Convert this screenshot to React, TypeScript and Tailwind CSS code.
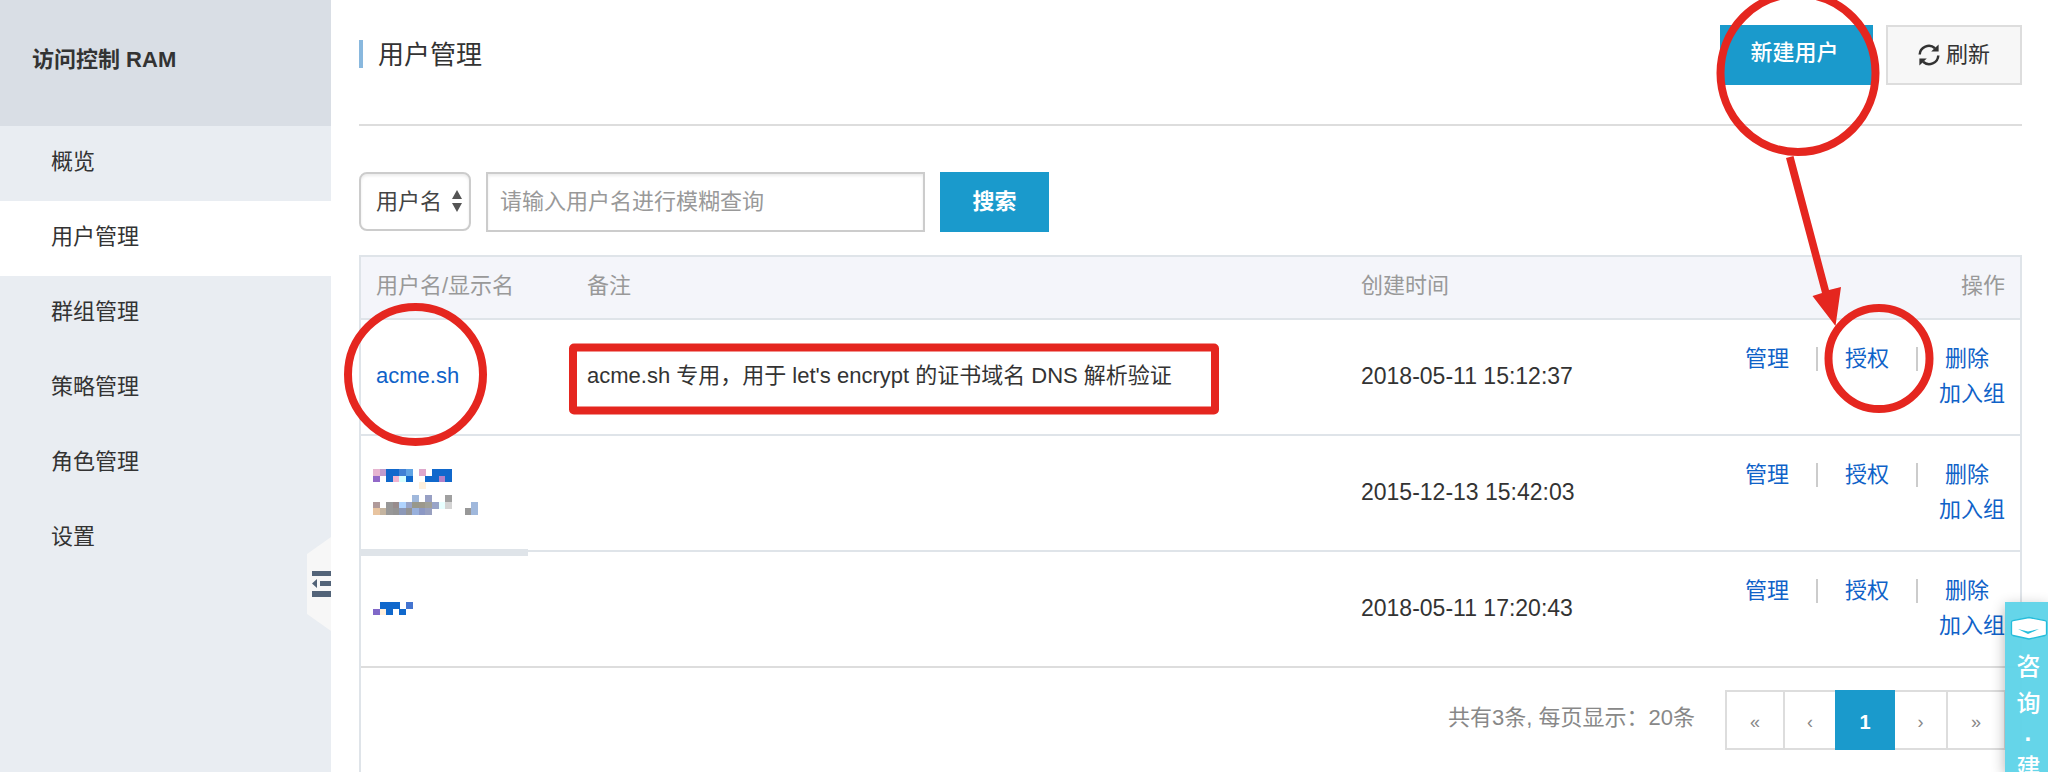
import React from "react";

const MENU = ["概览", "用户管理", "群组管理", "策略管理", "角色管理", "设置"];
const ACTIVE_MENU = "用户管理";

type Pixel = [column: number, row: number, color: string];

const BLUE = "#1068cc";

const NAME_PIXELS_A: Pixel[] = [
  [0, 0, "#e6b4d0"], [1, 0, "#c09ccc"], [2, 0, BLUE], [3, 0, BLUE], [4, 0, "#4080d4"], [5, 0, "#60a4e4"],
  [7, 0, "#dea8cc"], [9, 0, BLUE], [10, 0, BLUE], [11, 0, BLUE],
  [0, 1, "#9268c8"], [2, 1, BLUE], [3, 1, "#f0b4d0"], [4, 1, "#d4ffff"], [5, 1, BLUE],
  [8, 1, BLUE], [9, 1, BLUE], [10, 1, "#b480c8"], [11, 1, BLUE],
  [7, 2, "#fff0dc"],
  [6, 4, "#a0b8dc"], [8, 4, "#98a0c4"], [11, 4, "#a0a0a0"],
  [0, 5, "#b09a9a"], [2, 5, "#989898"], [3, 5, "#988c8c"], [4, 5, "#b0d4ff"], [5, 5, "#98a4c8"], [6, 5, "#98988c"],
  [7, 5, "#9c988c"], [8, 5, "#a0a098"], [9, 5, "#98a4c8"], [10, 5, "#e8ffff"], [11, 5, "#d4d4d4"], [15, 5, "#a0b8dc"],
  [0, 6, "#e8c4a0"], [1, 6, "#c4b4a0"], [2, 6, "#989898"], [3, 6, "#949494"], [4, 6, "#8c98b8"], [5, 6, "#949494"],
  [6, 6, "#98b0dc"], [7, 6, "#8c98c4"], [8, 6, "#98a0c0"], [14, 6, "#989898"], [15, 6, "#a0b8dc"],
];

const NAME_PIXELS_B: Pixel[] = [
  [1, 0, BLUE], [2, 0, BLUE], [3, 0, BLUE], [5, 0, "#4474d0"],
  [0, 1, "#8068c8"], [1, 1, "#fff0dc"], [2, 1, BLUE], [4, 1, BLUE],
];

interface User {
  name?: string;
  pixels?: Pixel[];
  pixelRows?: number;
  note: string;
  created: string;
}

const USERS: User[] = [
  { name: "acme.sh", note: "acme.sh 专用，用于 let's encrypt 的证书域名 DNS 解析验证", created: "2018-05-11 15:12:37" },
  { pixels: NAME_PIXELS_A, pixelRows: 7, note: "", created: "2015-12-13 15:42:03" },
  { pixels: NAME_PIXELS_B, pixelRows: 2, note: "", created: "2018-05-11 17:20:43" },
];

function Mosaic({ pixels, rows }: { pixels: Pixel[]; rows: number }) {
  const cell = 6.56;
  return (
    <svg className="-ml-[3px] block" width={105} height={Math.round(rows * cell)} shapeRendering="crispEdges" aria-hidden="true">
      {pixels.map(([c, r, color]) => (
        <rect key={`${c}-${r}`} x={c * cell} y={r * cell} width={cell + 0.3} height={cell + 0.3} fill={color} />
      ))}
    </svg>
  );
}

function RefreshIcon() {
  return (
    <svg width="22" height="22" viewBox="0 0 22 22" aria-hidden="true">
      <path d="M1.700 10.500A9.200 9 0 0 1 17 4.200" fill="none" stroke="#333" strokeWidth="2.500" />
      <path d="M20.600 0.500V7.600H13.200Z" fill="#333" />
      <path d="M20.300 11.500A9.200 9 0 0 1 5 17.800" fill="none" stroke="#333" strokeWidth="2.500" />
      <path d="M1.400 21.500V14.400H8.800Z" fill="#333" />
    </svg>
  );
}

function Sidebar() {
  return (
    <aside className="relative w-[331px] shrink-0 bg-[#e9edf2]">
      <div className="flex h-[126px] items-center bg-[#d9dee5] pb-1.5 pl-8 font-bold">访问控制 RAM</div>
      <nav>
        {MENU.map((item) => (
          <a
            key={item}
            href="#"
            className={
              item === ACTIVE_MENU
                ? "flex h-[75px] items-center bg-white pb-1 pl-[51px]"
                : "flex h-[75px] items-center pb-1 pl-[51px]"
            }
          >
            {item}
          </a>
        ))}
      </nav>
      <button type="button" aria-label="收起菜单" className="absolute top-[537px] right-0">
        <svg className="block" width="24" height="94" viewBox="0 0 24 94" aria-hidden="true">
          <path d="M24 0L0 17V77L24 94Z" fill="#f7f7f7" />
          <path d="M5 34H24V39H5ZM13 44H24V49H13ZM5 54H24V60H5ZM10 42V51L5 46.500Z" fill="#526378" />
        </svg>
      </button>
    </aside>
  );
}

function Separator() {
  return (
    <span className="flex w-14 justify-center">
      <span className="h-6 w-0.5 bg-[#ccc]" />
    </span>
  );
}

function Actions() {
  return (
    <div className="flex flex-col items-end leading-[35px] text-[#0f62c8]">
      <div className="flex items-center pr-4">
        <a href="#">管理</a>
        <Separator />
        <a href="#">授权</a>
        <Separator />
        <a href="#">删除</a>
      </div>
      <a href="#">加入组</a>
    </div>
  );
}

function UserTable() {
  return (
    <table className="w-full table-fixed border-separate border-spacing-0 text-left">
      <thead>
        <tr className="h-[63px] bg-[#f4f5fa] text-[#999]">
          <th className="w-[211px] border-b-2 border-[#dfe4e9] px-[15px] pb-1 font-normal">用户名/显示名</th>
          <th className="border-b-2 border-[#dfe4e9] px-[15px] pb-1 font-normal">备注</th>
          <th className="w-[300px] border-b-2 border-[#dfe4e9] px-[15px] pb-1 font-normal">创建时间</th>
          <th className="w-[374px] border-b-2 border-[#dfe4e9] px-[15px] pb-1 text-right font-normal">操作</th>
        </tr>
      </thead>
      <tbody>
        {USERS.map((user, i) => {
          const line = i === USERS.length - 1 ? "border-b-2 border-[#ddd]" : "border-b-2 border-[#dfe4e9]";
          return (
            <tr key={user.created} className="h-[116px]">
              <td className={`relative px-[15px] pb-0.5 ${line}`}>
                {user.name && <a href="#" className="text-[#0f62c8]">{user.name}</a>}
                {user.pixels && <Mosaic pixels={user.pixels} rows={user.pixelRows ?? 1} />}
                {i === 1 && <span className="absolute -bottom-1.5 -left-0.5 h-[7px] w-[169px] bg-[#dfe4e9]" />}
              </td>
              <td className={`px-[15px] pb-0.5 ${line}`}>{user.note}</td>
              <td className={`px-[15px] pb-0.5 text-[23px] ${line}`}>{user.created}</td>
              <td className={`px-[15px] pb-0.5 ${line}`}><Actions /></td>
            </tr>
          );
        })}
      </tbody>
    </table>
  );
}

function Pagination() {
  return (
    <div className="flex items-center justify-end pt-[22px] pr-3.5">
      <span className="pr-[30px] pb-1 text-[#888]">共有3条, 每页显示：20条</span>
      <div className="flex h-[60px] text-lg text-[#888]">
        <button type="button" className="w-[60px] border-2 border-[#ddd] pt-1">«</button>
        <button type="button" className="w-[50px] border-y-2 border-[#ddd] pt-1">‹</button>
        <button type="button" className="w-[60px] bg-[#1a9acc] pt-1 text-xl font-bold text-white">1</button>
        <button type="button" className="w-[51px] border-y-2 border-[#ddd] pt-1">›</button>
        <button type="button" className="w-[60px] border-2 border-[#ddd] pt-1">»</button>
      </div>
    </div>
  );
}

function ConsultTab() {
  return (
    <a
      href="#"
      className="absolute top-[602px] right-0 bottom-0 flex w-[43px] flex-col items-center bg-[#5dd3e8]/95 pt-[14px] pl-1 text-2xl font-medium text-white shadow-[0_4px_14px_rgba(0,0,0,0.3)]"
    >
      <svg className="mb-[7px] shrink-0" width="38" height="25" viewBox="0 0 38 25" aria-hidden="true">
        <path d="M1.500 6Q1.500 5 3 4.600L19 1.500L35 4.600Q36.500 5 36.500 6V18Q36.500 19 35 19.500L19 23L3 19.500Q1.500 19 1.500 18Z" fill="#fff" stroke="#25bddb" strokeWidth="1.300" />
        <path d="M8 13L18 15.500L29 13L18 18Z" fill="#25bddb" />
      </svg>
      <span className="leading-[37px]">咨</span>
      <span className="leading-[37px]">询</span>
      <span className="leading-[34px] font-bold">·</span>
      <span className="leading-6">建</span>
    </a>
  );
}

function Annotations() {
  return (
    <>
      <svg className="pointer-events-none absolute top-[300px] left-[340px]" width="900" height="150" fill="none" stroke="#e5261f" strokeWidth="8" aria-hidden="true">
        <circle cx="75.500" cy="74.500" r="67.500" />
        <rect x="233" y="47.500" width="642" height="63" rx="1" />
      </svg>
      <svg className="pointer-events-none absolute top-0 right-0" width="348" height="420" fill="none" stroke="#e5261f" strokeWidth="8" aria-hidden="true">
        <ellipse cx="98" cy="73" rx="77.500" ry="79" />
        <circle cx="179" cy="358.500" r="50.500" />
        <path d="M86 158L93.500 156L129 290L141 287L135.500 326L112.500 296L122 293Z" fill="#e5261f" stroke="none" />
      </svg>
    </>
  );
}

export default function App() {
  return (
    <div className="relative flex min-h-screen overflow-hidden bg-white font-['Liberation_Sans','Noto_Sans_CJK_SC',sans-serif] text-[22px] leading-[34px] text-[#333]">
      <Sidebar />
      <main className="flex min-w-0 flex-1 flex-col pr-[26px] pl-7">
        <header className="flex items-start gap-[13px] border-b-2 border-[#ddd] pt-[25px] pb-[39px]">
          <div className="mt-[15px] mr-auto flex h-7 items-center border-l-4 border-[#89b8de] pt-0.5 pl-[15px]">
            <h1 className="text-[26px]">用户管理</h1>
          </div>
          <button type="button" className="h-[60px] w-[153px] bg-[#1a9acc] pr-1 pb-1 font-medium text-white">新建用户</button>
          <button type="button" className="flex h-[60px] w-[136px] items-center justify-center gap-1.5 border-2 border-[#ddd] bg-[#f7f7f7]">
            <RefreshIcon />
            刷新
          </button>
        </header>
        <form className="flex pt-[46px] pb-[23px]" onSubmit={(e) => e.preventDefault()}>
          <div className="relative mr-[15px]">
            <select
              aria-label="查询字段"
              className="h-[59px] w-[112px] appearance-none rounded-lg border-2 border-[#ccc] bg-white pl-[15px] text-[#444] shadow-[inset_0_2px_3px_rgba(0,0,0,0.08)]"
            >
              <option>用户名</option>
            </select>
            <svg className="pointer-events-none absolute top-[18px] right-[9px]" width="10" height="22" aria-hidden="true">
              <path d="M5 0L10 9H0ZM0 13H10L5 22Z" fill="#555" />
            </svg>
          </div>
          <input
            type="text"
            aria-label="用户名"
            placeholder="请输入用户名进行模糊查询"
            className="mr-[15px] h-[60px] w-[439px] border-2 border-[#ccc] px-3 shadow-[inset_0_2px_3px_rgba(0,0,0,0.08)] placeholder:text-[#999]"
          />
          <button type="submit" className="h-[60px] w-[109px] bg-[#1a9acc] font-bold text-white">搜索</button>
        </form>
        <section className="flex-1 border-x-2 border-t-2 border-[#dfe4e9]">
          <UserTable />
          <Pagination />
        </section>
      </main>
      <ConsultTab />
      <Annotations />
    </div>
  );
}
